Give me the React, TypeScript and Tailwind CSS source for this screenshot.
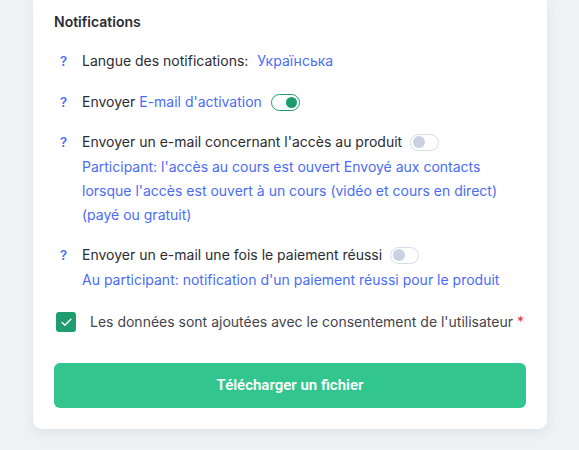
import { Check } from "lucide-react"

function Toggle({ on }: { on: boolean }) {
  return (
    <span
      className={
        on
          ? "inline-flex h-[17px] w-[29px] items-center justify-end rounded-full border-[1.5px] border-[#1c9b6c] bg-white px-[2px]"
          : "inline-flex h-[17px] w-[29px] items-center justify-start rounded-full border border-[#d5dbe8] bg-white px-[2px]"
      }
    >
      <span className={on ? "h-[11px] w-[11px] rounded-full bg-[#1c9b6c]" : "h-[12px] w-[12px] rounded-full bg-[#c9d1e2]"} />
    </span>
  )
}

function Help() {
  return <span className="w-[28px] shrink-0 pl-[6px] text-[13px] font-semibold text-[#4a6cf7]">?</span>
}

export default function App() {
  return (
    <div className="min-h-[450px] bg-[#eff2f4] font-['Inter','Noto_Sans',sans-serif] text-[14px]">
      <div className="ml-[33px] w-[514px] rounded-b-[9px] bg-white px-[21px] pb-[21px] pt-[12px] shadow-[0_4px_12px_rgba(40,60,90,0.08)]">
        <h2 className="text-[14px] font-semibold leading-[20px] text-[#2b2b33]">Notifications</h2>

        <div className="mt-[19px] flex items-center leading-[20px]">
          <Help />
          <span className="text-[#2b2b33]">Langue des notifications:</span>
          <span className="ml-[9px] text-[#4a6cf7]">Українська</span>
        </div>

        <div className="mt-[21px] flex items-center leading-[20px]">
          <Help />
          <span className="text-[#2b2b33]">Envoyer</span>
          <span className="ml-[4px] text-[#4a6cf7]">E-mail d'activation</span>
          <span className="ml-[9px] flex">
            <Toggle on />
          </span>
        </div>

        <div className="mt-[20px] flex leading-[20px]">
          <Help />
          <div>
            <div className="flex items-center">
              <span className="text-[#2b2b33]">Envoyer un e-mail concernant l'accès au produit</span>
              <span className="ml-[8px] flex">
                <Toggle on={false} />
              </span>
            </div>
            <p className="mt-[3px] leading-[24px] text-[#4a6cf7]">
              Participant: l'accès au cours est ouvert Envoyé aux contacts
              <br />
              lorsque l'accès est ouvert à un cours (vidéo et cours en direct)
              <br />
              (payé ou gratuit)
            </p>
          </div>
        </div>

        <div className="mt-[18px] flex leading-[20px]">
          <Help />
          <div>
            <div className="flex items-center">
              <span className="text-[#2b2b33]">Envoyer un e-mail une fois le paiement réussi</span>
              <span className="ml-[8px] flex">
                <Toggle on={false} />
              </span>
            </div>
            <p className="mt-[3px] leading-[24px] text-[#4a6cf7]">
              Au participant: notification d'un paiement réussi pour le produit
            </p>
          </div>
        </div>

        <div className="mt-[20px] flex items-center">
          <span className="ml-[2px] flex h-[20px] w-[20px] items-center justify-center rounded-[3px] bg-[#1f9d6e]">
            <Check className="h-[13px] w-[13px] text-white" strokeWidth={2.5} />
          </span>
          <span className="ml-[14px] leading-[20px] text-[#44444c]">
            Les données sont ajoutées avec le consentement de l'utilisateur{" "}
            <span className="text-[#e5343a]">*</span>
          </span>
        </div>

        <button className="mt-[31px] flex h-[45px] w-full items-center justify-center rounded-[6px] bg-[#32c68e] font-['Roboto',sans-serif] text-[15px] font-semibold text-white">
          Télécharger un fichier
        </button>
      </div>
    </div>
  )
}
